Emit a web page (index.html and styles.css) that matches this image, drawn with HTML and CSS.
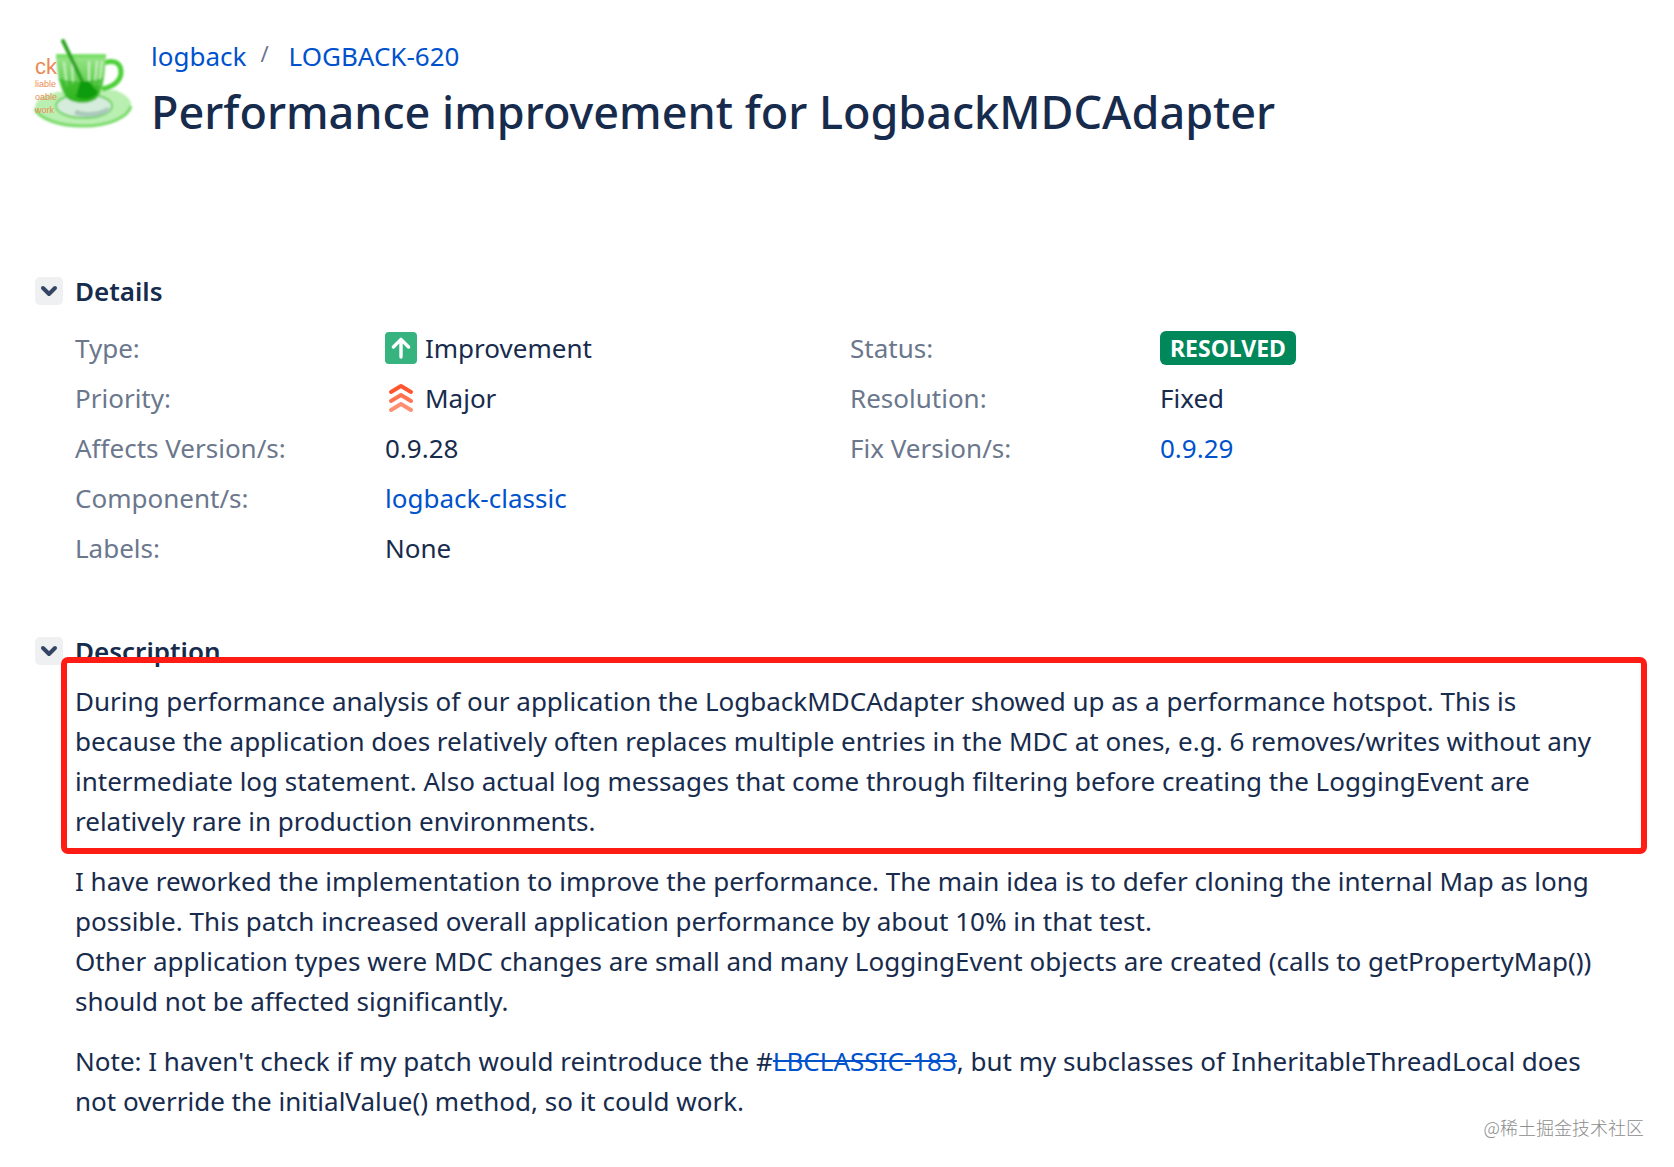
FILE: index.html
```html
<!DOCTYPE html>
<html lang="en">

<head>
    <meta charset="utf-8">
    <title>[LOGBACK-620] Performance improvement for LogbackMDCAdapter</title>
    <link rel="stylesheet" href="styles.css">
</head>
<body>
    <header class="issue-header">
        <svg class="avatar" viewBox="0 0 96 96" aria-hidden="true">
            <defs>
                <linearGradient id="glass" x1="0" y1="0" x2="0" y2="1">
                    <stop offset="0" stop-color="#9be58c"/>
                    <stop offset="0.5" stop-color="#6bd35a"/>
                    <stop offset="1" stop-color="#2fb51f"/>
                </linearGradient>
                <filter id="soft"><feGaussianBlur stdDeviation="0.8"/></filter>
            </defs>
            <g filter="url(#soft)">
                <path d="M80 52c10 4 16 9 16 14 0 12-21 22-47 22C24 88 3 80 0 70c0-9 9-13 22-16z" fill="#b9efb0"/>
                <path d="M0 71c5 10 24 17 48 17 27 0 45-9 48-20" fill="none" stroke="#7adb69" stroke-width="3"/>
                <ellipse cx="49" cy="68" rx="28" ry="12" fill="#d5ecdc" stroke="#6fd35f" stroke-width="2"/>
                <path d="M40 74c10 4 25 3 34-3" fill="none" stroke="#a9c9bb" stroke-width="5"/>
                <path d="M69 25c10-4 17 0 17 9s-8 15-19 17" fill="none" stroke="#4bd037" stroke-width="5"/>
                <path d="M21 17h50c-1 17-2 33-8 42-5 7-24 8-31 1-7-7-10-25-11-43z" fill="url(#glass)"/>
                <path d="M21 18h50" stroke="#7be069" stroke-width="4"/>
                <path d="M29 24l3 24M37 24l1 22M54 23v20M62 23l-2 24M67 23l-3 25" stroke="#ddf6d6" stroke-width="2" opacity="0.8"/>
                <path d="M23 40c12 5 33 4 45 0l-5 17c-7 9-24 9-31 2z" fill="#2fb51f" opacity="0.65"/>
                <path d="M28 3l22 46" stroke="#2ba521" stroke-width="4" stroke-linecap="round"/>
                <path d="M45 44l8-1 10 11c-3 7-14 9-22 5z" fill="#119c08"/>
            </g>
            <g class="avatar-text">
                <text x="0" y="36" font-size="22">ck</text>
                <text x="0" y="49" font-size="9">liable</text>
                <text x="0" y="62" font-size="9">oable</text>
                <text x="0" y="75" font-size="9">work</text>
            </g>
        </svg>
        <div class="issue-title">
            <nav class="breadcrumb">
                <a href="#">logback</a>
                <span class="slash">/</span>
                <a href="#">LOGBACK-620</a>
            </nav>
            <h1>Performance improvement for LogbackMDCAdapter</h1>
        </div>
    </header>

    <section class="module">
        <div class="module-head">
            <button type="button" class="toggle" aria-label="Toggle details">
                <svg viewBox="0 0 28 28"><path d="M8 11l6 6 6-6"/></svg>
            </button>
            <h2>Details</h2>
        </div>
        <div class="details">
            <dl>
                <dt>Type:</dt>
                <dd>
                    <svg class="icon" viewBox="0 0 16 16">
                        <rect width="16" height="16" rx="2" fill="#36b37e"/>
                        <path d="M8 12.500V4M4.200 7.500L8 3.700l3.800 3.800" fill="none" stroke="#fff" stroke-width="1.700" stroke-linecap="round" stroke-linejoin="round"/>
                    </svg>
                    Improvement
                </dd>
                <dt>Priority:</dt>
                <dd>
                    <svg class="icon" viewBox="0 0 32 32" fill="none" stroke-width="4" stroke-linecap="round" stroke-linejoin="round">
                        <path d="M6 10l10-6 10 6" stroke="#ff5630"/>
                        <path d="M6 19l10-6 10 6" stroke="#ff7452"/>
                        <path d="M6 28l10-6 10 6" stroke="#ff8f73"/>
                    </svg>
                    Major
                </dd>
                <dt>Affects Version/s:</dt>
                <dd>0.9.28</dd>
                <dt>Component/s:</dt>
                <dd><a href="#">logback-classic</a></dd>
                <dt>Labels:</dt>
                <dd>None</dd>
            </dl>
            <dl>
                <dt>Status:</dt>
                <dd><span class="badge">RESOLVED</span></dd>
                <dt>Resolution:</dt>
                <dd>Fixed</dd>
                <dt>Fix Version/s:</dt>
                <dd><a href="#">0.9.29</a></dd>
            </dl>
        </div>
    </section>

    <section class="module">
        <div class="module-head">
            <button type="button" class="toggle" aria-label="Toggle description">
                <svg viewBox="0 0 28 28"><path d="M8 11l6 6 6-6"/></svg>
            </button>
            <h2>Description</h2>
        </div>
        <div class="description">
            <p class="marked">During performance analysis of our application the LogbackMDCAdapter showed up as a performance hotspot. This is
            because the application does relatively often replaces multiple entries in the MDC at ones, e.g. 6 removes/writes without any
            intermediate log statement. Also actual log messages that come through filtering before creating the LoggingEvent are
            relatively rare in production environments.</p>
            <p>I have reworked the implementation to improve the performance. The main idea is to defer cloning the internal Map as long
            possible. This patch increased overall application performance by about 10% in that test.<br>
            Other application types were MDC changes are small and many LoggingEvent objects are created (calls to getPropertyMap())
            should not be affected significantly.</p>
            <p>Note: I haven't check if my patch would reintroduce the #<a class="closed" href="#">LBCLASSIC-183</a>, but my subclasses of InheritableThreadLocal does
            not override the initialValue() method, so it could work.</p>
        </div>
    </section>

    <footer class="watermark">@稀土掘金技术社区</footer>
</body>

</html>
```

FILE: styles.css
```css
* {
    margin: 0;
    box-sizing: border-box;
}

body {
    padding: 32px 35px 20px;
    background-color: #fff;
    color: #172b4d;
    font-family: "Noto Sans", "Open Sans", sans-serif;
    font-size: 26px;
    line-height: 40px;
}

a {
    color: #0052cc;
    text-decoration: none;
}

.issue-header {
    display: flex;
    gap: 20px;
    margin-bottom: 123px;
}

.avatar {
    flex: none;
    width: 96px;
    height: 96px;
    margin-top: 6px;
    overflow: visible;
}

.avatar-text {
    fill: #ec8a55;
    font-family: "Liberation Sans", sans-serif;
}

.issue-title {
    padding-top: 4px;
}

.breadcrumb {
    display: flex;
}

.slash {
    margin: 0 20px 0 14px;
    color: #6b778c;
    font-size: 22px;
    line-height: 34px;
}

h1 {
    font-size: 45px;
    font-weight: 500;
    line-height: 72px;
}

.module {
    margin-bottom: 58px;
}

.module-head {
    display: flex;
    align-items: center;
    gap: 12px;
}

h2 {
    font-size: 26px;
    font-weight: 600;
    line-height: 40px;
}

.toggle {
    width: 28px;
    height: 28px;
    padding: 0;
    border: 0;
    border-radius: 5px;
    background-color: #eff0f2;
    cursor: pointer;
}

.toggle svg {
    display: block;
    fill: none;
    stroke: #344563;
    stroke-width: 4;
    stroke-linecap: round;
    stroke-linejoin: round;
}

.details {
    display: grid;
    grid-template-columns: 775fr 784fr;
    padding: 12px 5px 0 40px;
}

dl {
    display: grid;
    grid-template-columns: 310px 1fr;
    align-content: start;
    line-height: 50px;
}

dt {
    color: #6b778c;
}

dd {
    display: flex;
    align-items: center;
}

.icon {
    width: 32px;
    height: 32px;
    margin-right: 8px;
}

.badge {
    padding: 0 10px;
    border-radius: 6px;
    background-color: #00875a;
    color: #fff;
    font-size: 23px;
    font-weight: 700;
    line-height: 34px;
}

.description {
    padding: 10px 16px 0 40px;
}

.description p {
    margin-bottom: 20px;
}

.marked {
    position: relative;
}

/* red frame round the quoted paragraph */
.marked::after {
    content: "";
    position: absolute;
    top: -24px;
    right: -24px;
    bottom: -13px;
    left: -14px;
    border: 6px solid #ff1c14;
    border-radius: 7px;
}

.closed {
    text-decoration: line-through;
}

.watermark {
    margin: -64px -5px 0 0;
    color: #8c8c8c;
    font-family: "Noto Sans CJK SC", sans-serif;
    font-size: 18px;
    font-weight: 300;
    line-height: 24px;
    text-align: right;
}
```
